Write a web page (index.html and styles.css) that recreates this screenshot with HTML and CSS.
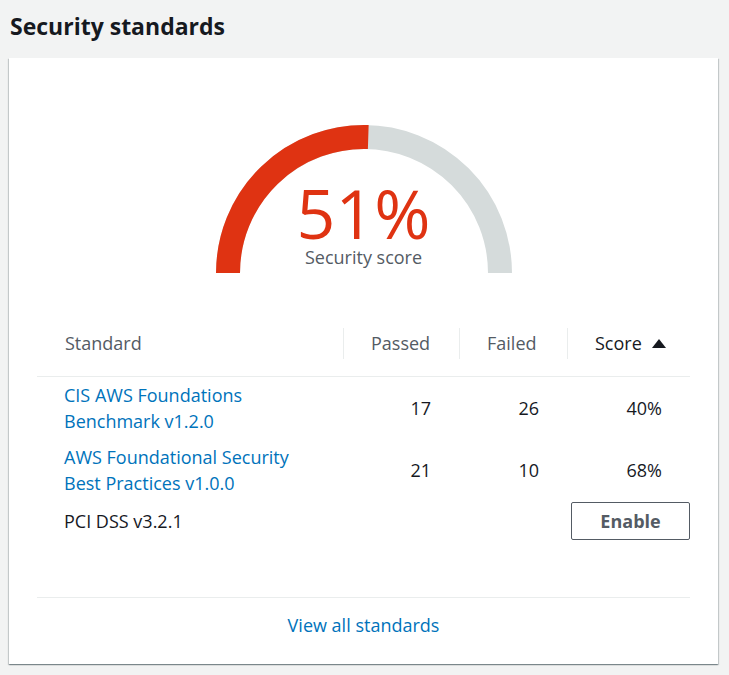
FILE: index.html
```html
<!DOCTYPE html>
<html>
<head>
<meta charset="utf-8">
<link rel="stylesheet" href="styles.css">
</head>
<body>
<h2 class="title">Security standards</h2>
<div class="card">
  <div class="gauge">
    <svg class="gauge-svg" width="298" height="149" viewBox="0 0 298 149">
      <path d="M 13 149 A 136 136 0 0 1 285 149" fill="none" stroke="#d5dbdb" stroke-width="24"/>
      <path d="M 13 149 A 136 136 0 0 1 153.27 13.07" fill="none" stroke="#df3312" stroke-width="24"/>
    </svg>
    <div class="gauge-label">
      <div class="gauge-value">51%</div>
      <div class="gauge-caption">Security score</div>
    </div>
  </div>
  <div class="grid">
    <div class="th first"><div class="th-in">Standard</div></div>
    <div class="th"><div class="th-in sep">Passed</div></div>
    <div class="th"><div class="th-in sep">Failed</div></div>
    <div class="th"><div class="th-in sep sorted">Score<svg class="arrow" width="14" height="9" viewBox="0 0 14 9"><path d="M7 0 L14 9 L0 9 Z" fill="#16191f"/></svg></div></div>

    <div class="td name r1"><a class="link" href="#">CIS AWS Foundations<br>Benchmark v1.2.0</a></div>
    <div class="td num r1">17</div>
    <div class="td num r1">26</div>
    <div class="td num r1">40%</div>

    <div class="td name r2"><a class="link" href="#">AWS Foundational Security<br>Best Practices v1.0.0</a></div>
    <div class="td num r2">21</div>
    <div class="td num r2">10</div>
    <div class="td num r2">68%</div>

    <div class="td name r3">PCI DSS v3.2.1</div>
    <div class="td r3"></div>
    <div class="td r3"></div>
    <div class="td btn-cell r3"><button class="btn">Enable</button></div>
  </div>
  <div class="footer"><a class="link" href="#">View all standards</a></div>
</div>
</body>
</html>
```
FILE: styles.css
```css
html, body {
  margin: 0;
  padding: 0;
  background: #f2f3f3;
  font-family: "Open Sans", "Noto Sans", sans-serif;
  color: #16191f;
}
.title {
  margin: 0;
  padding: 11px 10px 0 10px;
  font-size: 23px;
  line-height: 30px;
  font-weight: 700;
  color: #16191f;
}
.card {
  margin: 17px 11px 10px 9px;
  background: #fff;
  padding: 66px 28px 0 28px;
  box-shadow: 0 1px 1px 0 rgba(0,28,36,.3), 1px 1px 1px 0 rgba(0,28,36,.15), -1px 1px 1px 0 rgba(0,28,36,.15);
}
.gauge {
  position: relative;
  width: 298px;
  height: 149px;
  margin: 0 auto;
}
.gauge-svg {
  display: block;
}
.gauge-label {
  position: absolute;
  left: 0;
  right: 0;
  bottom: 5px;
  text-align: center;
}
.gauge-value {
  font-size: 68px;
  line-height: 66px;
  color: #df3312;
}
.gauge-caption {
  font-size: 18px;
  line-height: 22px;
  color: #545b64;
}
.grid {
  display: grid;
  grid-template-columns: 306px 116px 108px 123px;
  margin-top: 55px;
}
.th {
  padding-bottom: 17px;
  border-bottom: 1px solid #eaeded;
  color: #545b64;
  font-size: 18px;
}
.th-in {
  line-height: 31px;
  padding-left: 28px;
  display: flex;
  align-items: center;
}
.th-in.sep {
  border-left: 1px solid #eaeded;
  padding-left: 27px;
}
.sorted {
  color: #16191f;
}
.arrow {
  margin-left: 10px;
  margin-top: -1px;
}
.td {
  font-size: 18px;
  line-height: 26px;
  display: flex;
  align-items: center;
}
.r1 { padding-top: 5px; padding-bottom: 5px; }
.r2 { padding-top: 5px; padding-bottom: 5px; }
.r3 { padding-top: 1px; padding-bottom: 0; }
.name {
  padding-left: 27px;
}
.num {
  justify-content: flex-end;
  padding-right: 28px;
}
.btn-cell {
  justify-content: flex-end;
}
.link {
  color: #0073bb;
  text-decoration: none;
}
.btn {
  width: 119px;
  height: 38px;
  background: #fff;
  border: 1px solid #545b64;
  border-radius: 2px;
  color: #545b64;
  font-family: inherit;
  font-size: 18px;
  font-weight: 700;
  padding: 0;
}
.footer {
  margin-top: 57px;
  border-top: 1px solid #eaeded;
  text-align: center;
  padding: 14px 0 26px 0;
  font-size: 18px;
  line-height: 26px;
}
```
